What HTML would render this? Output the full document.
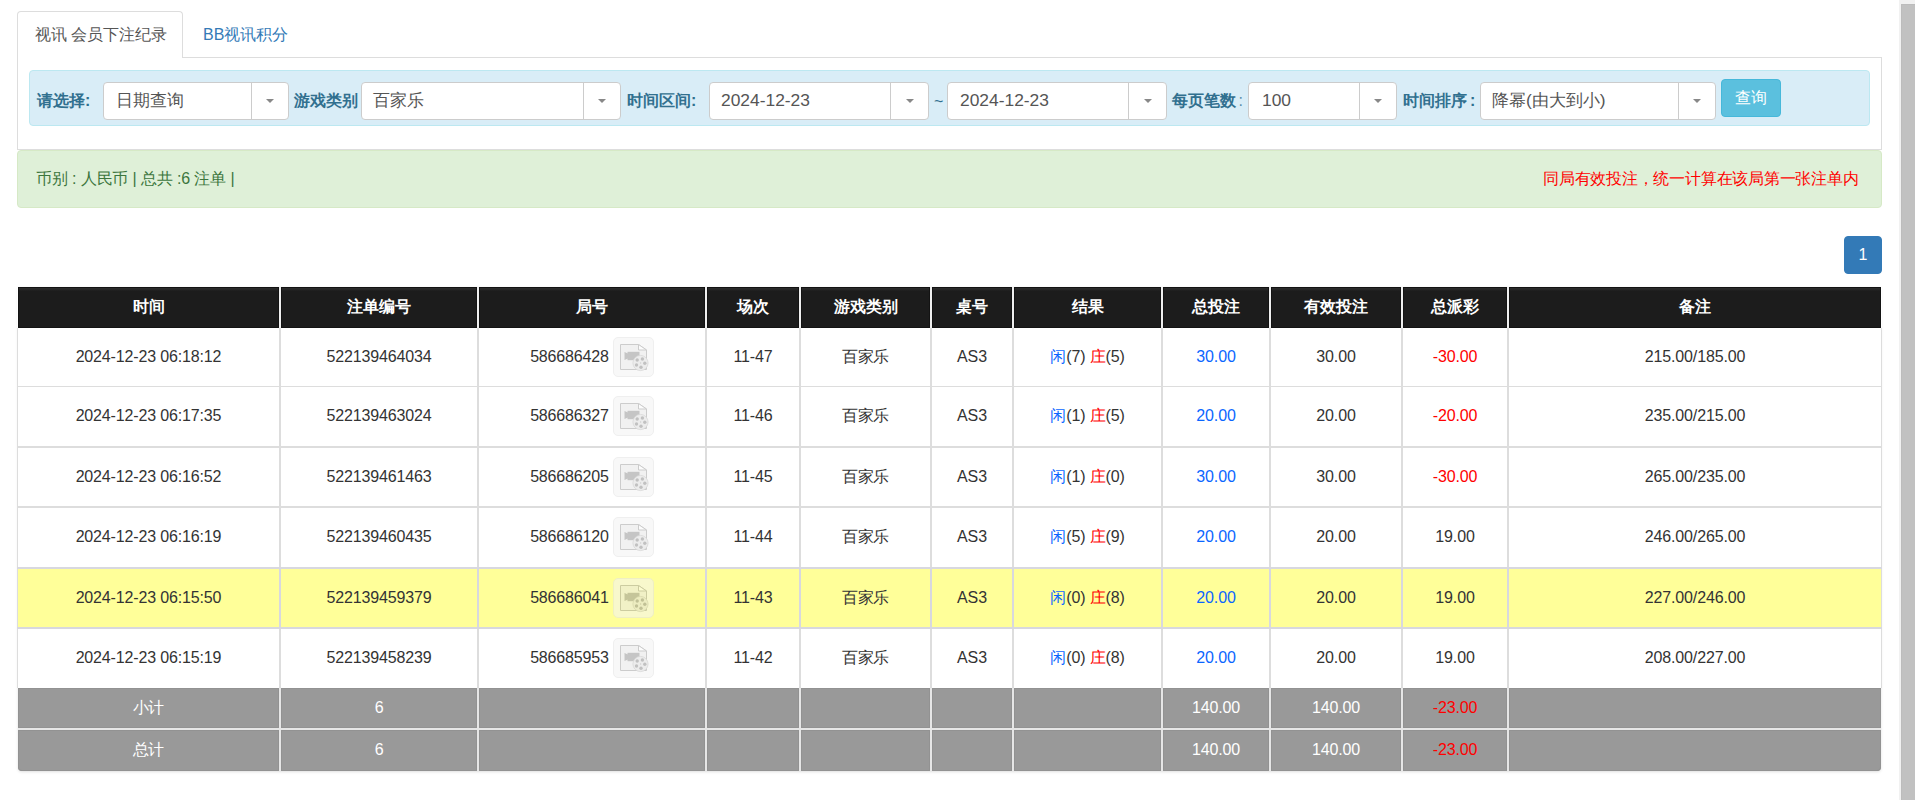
<!DOCTYPE html><html><head><meta charset="utf-8"><style>
*{box-sizing:border-box;margin:0;padding:0}
html,body{width:1915px;height:800px;overflow:hidden;background:#fff}
body{position:relative;font-family:"Liberation Sans",sans-serif;font-size:16px;color:#333}
.abs{position:absolute}
.t{position:absolute;white-space:nowrap}
.sel{position:absolute;background:#fff;border:1px solid #ccc;border-radius:4px}
.sel .dv{position:absolute;top:0;bottom:0;width:1px;background:#ccc}
.sel .txt{position:absolute;top:0;white-space:nowrap;color:#555;line-height:36px;font-size:17.4px;margin-top:-1px}
.caret{position:absolute;width:0;height:0;border-left:4px solid transparent;border-right:4px solid transparent;border-top:4px solid #888}
.lbl{position:absolute;white-space:nowrap;color:#31708f;font-weight:bold;line-height:20px}
.vl{position:absolute}
.cell{position:absolute;text-align:center;white-space:nowrap;letter-spacing:-0.15px}
.hd{letter-spacing:0}
.blue{color:#0a66ff}
.red{color:#ff0000}
</style></head><body>
<div class="abs" style="left:17px;top:11px;width:166px;height:47px;border:1px solid #ddd;border-bottom:none;border-radius:4px 4px 0 0;background:#fff;z-index:2"></div>
<div class="t" style="left:35px;top:25px;line-height:20px;color:#555;z-index:3">视讯 会员下注纪录</div>
<div class="t" style="left:203px;top:25px;line-height:20px;color:#337ab7">BB视讯积分</div>
<div class="abs" style="left:17px;top:57px;width:1865px;height:93px;border:1px solid #ddd;border-bottom:1px solid #ddd"></div>
<div class="abs" style="left:18px;top:57px;width:164px;height:1px;background:#fff;z-index:2"></div>
<div class="abs" style="left:29px;top:70px;width:1841px;height:56px;background:#d9edf7;border:1px solid #bce8f1;border-radius:4px"></div>
<div class="lbl" style="left:37px;top:91px">请选择:</div>
<div class="sel" style="left:103px;top:82px;width:186px;height:38px"><div class="txt" style="left:12px">日期查询</div><div class="dv" style="left:147px"></div><div class="caret" style="left:162px;top:16px"></div></div>
<div class="lbl" style="left:294px;top:91px">游戏类别</div>
<div class="sel" style="left:361px;top:82px;width:260px;height:38px"><div class="txt" style="left:11px">百家乐</div><div class="dv" style="left:221px"></div><div class="caret" style="left:236px;top:16px"></div></div>
<div class="lbl" style="left:627px;top:91px">时间区间:</div>
<div class="sel" style="left:709px;top:82px;width:220px;height:38px"><div class="txt" style="left:11px">2024-12-23</div><div class="dv" style="left:180px"></div><div class="caret" style="left:196px;top:16px"></div></div>
<div class="t" style="left:934px;top:92px;line-height:20px;color:#31708f">~</div>
<div class="sel" style="left:947px;top:82px;width:220px;height:38px"><div class="txt" style="left:12px">2024-12-23</div><div class="dv" style="left:180px"></div><div class="caret" style="left:196px;top:16px"></div></div>
<div class="lbl" style="left:1172px;top:91px">每页笔数 <span style="font-weight:normal;margin-left:-2px;opacity:.75">:</span></div>
<div class="sel" style="left:1248px;top:82px;width:149px;height:38px"><div class="txt" style="left:13px">100</div><div class="dv" style="left:110px"></div><div class="caret" style="left:125px;top:16px"></div></div>
<div class="lbl" style="left:1403px;top:91px">时间排序 <span style="margin-left:-1.5px">:</span></div>
<div class="sel" style="left:1480px;top:82px;width:236px;height:38px"><div class="txt" style="left:11px">降幂(由大到小)</div><div class="dv" style="left:197px"></div><div class="caret" style="left:212px;top:16px"></div></div>
<div class="abs" style="left:1721px;top:79px;width:60px;height:38px;background:#5bc0de;border:1px solid #46b8da;border-radius:4px;color:#fff;text-align:center;line-height:36px">查询</div>
<div class="abs" style="left:17px;top:150px;width:1865px;height:58px;background:#dff0d8;border:1px solid #d6e9c6;border-radius:4px"></div>
<div class="t" style="left:36px;top:169px;line-height:20px;color:#3c763d;letter-spacing:-0.13px">币别 : 人民币 | 总共 :6 注单 |</div>
<div class="t" style="left:1543px;top:169px;line-height:20px;color:#ff0000;letter-spacing:-0.22px">同局有效投注，统一计算在该局第一张注单内</div>
<div class="abs" style="left:1844px;top:236px;width:38px;height:38px;background:#337ab7;border:1px solid #337ab7;border-radius:4px;color:#fff;text-align:center;line-height:36px">1</div>
<div class="abs" style="left:18px;top:287px;width:1863px;height:484px;border-radius:0 0 4px 4px;box-shadow:0 1px 3px rgba(0,0,0,.13)"></div>
<div class="abs" style="left:17px;top:328px;width:1865px;height:360px;background:#fff"></div>
<div class="abs" style="left:17px;top:287px;width:1865px;height:41px;background:#efefef"></div>
<div class="cell hd" style="left:18px;top:287px;width:261px;height:41px;line-height:39px;color:#fff;font-weight:bold;background:linear-gradient(#2a2a2a 0,#2a2a2a 2px,#1c1c1c 4px,#1c1c1c);box-shadow:inset 0 0 0 1px #131313">时间</div>
<div class="cell hd" style="left:281px;top:287px;width:196px;height:41px;line-height:39px;color:#fff;font-weight:bold;background:linear-gradient(#2a2a2a 0,#2a2a2a 2px,#1c1c1c 4px,#1c1c1c);box-shadow:inset 0 0 0 1px #131313">注单编号</div>
<div class="cell hd" style="left:479px;top:287px;width:226px;height:41px;line-height:39px;color:#fff;font-weight:bold;background:linear-gradient(#2a2a2a 0,#2a2a2a 2px,#1c1c1c 4px,#1c1c1c);box-shadow:inset 0 0 0 1px #131313">局号</div>
<div class="cell hd" style="left:707px;top:287px;width:92px;height:41px;line-height:39px;color:#fff;font-weight:bold;background:linear-gradient(#2a2a2a 0,#2a2a2a 2px,#1c1c1c 4px,#1c1c1c);box-shadow:inset 0 0 0 1px #131313">场次</div>
<div class="cell hd" style="left:801px;top:287px;width:129px;height:41px;line-height:39px;color:#fff;font-weight:bold;background:linear-gradient(#2a2a2a 0,#2a2a2a 2px,#1c1c1c 4px,#1c1c1c);box-shadow:inset 0 0 0 1px #131313">游戏类别</div>
<div class="cell hd" style="left:932px;top:287px;width:80px;height:41px;line-height:39px;color:#fff;font-weight:bold;background:linear-gradient(#2a2a2a 0,#2a2a2a 2px,#1c1c1c 4px,#1c1c1c);box-shadow:inset 0 0 0 1px #131313">桌号</div>
<div class="cell hd" style="left:1014px;top:287px;width:147px;height:41px;line-height:39px;color:#fff;font-weight:bold;background:linear-gradient(#2a2a2a 0,#2a2a2a 2px,#1c1c1c 4px,#1c1c1c);box-shadow:inset 0 0 0 1px #131313">结果</div>
<div class="cell hd" style="left:1163px;top:287px;width:106px;height:41px;line-height:39px;color:#fff;font-weight:bold;background:linear-gradient(#2a2a2a 0,#2a2a2a 2px,#1c1c1c 4px,#1c1c1c);box-shadow:inset 0 0 0 1px #131313">总投注</div>
<div class="cell hd" style="left:1271px;top:287px;width:130px;height:41px;line-height:39px;color:#fff;font-weight:bold;background:linear-gradient(#2a2a2a 0,#2a2a2a 2px,#1c1c1c 4px,#1c1c1c);box-shadow:inset 0 0 0 1px #131313">有效投注</div>
<div class="cell hd" style="left:1403px;top:287px;width:104px;height:41px;line-height:39px;color:#fff;font-weight:bold;background:linear-gradient(#2a2a2a 0,#2a2a2a 2px,#1c1c1c 4px,#1c1c1c);box-shadow:inset 0 0 0 1px #131313">总派彩</div>
<div class="cell hd" style="left:1509px;top:287px;width:372px;height:41px;line-height:39px;color:#fff;font-weight:bold;background:linear-gradient(#2a2a2a 0,#2a2a2a 2px,#1c1c1c 4px,#1c1c1c);box-shadow:inset 0 0 0 1px #131313">备注</div>
<div class="abs" style="left:17px;top:287px;width:1px;height:41px;background:#fff"></div>
<div class="abs" style="left:1881px;top:287px;width:1px;height:41px;background:#fff"></div>
<div class="abs" style="left:18px;top:569px;width:1863px;height:58px;background:#ffff99"></div>
<div class="abs" style="left:17px;top:328px;width:1px;height:360px;background:#ddd"></div>
<div class="abs" style="left:1881px;top:328px;width:1px;height:360px;background:#ddd"></div>
<div class="abs" style="left:17px;top:386px;width:1865px;height:1px;background:#dddddd"></div>
<div class="abs" style="left:17px;top:446px;width:1865px;height:2px;background:#dddddd"></div>
<div class="abs" style="left:17px;top:506px;width:1865px;height:2px;background:#dddddd"></div>
<div class="abs" style="left:17px;top:567px;width:1865px;height:2px;background:#d8d8df"></div>
<div class="abs" style="left:17px;top:627px;width:1865px;height:2px;background:#d8d8df"></div>
<div class="abs" style="left:279px;top:328px;width:2px;height:360px;background:#dddddd"></div>
<div class="abs" style="left:279px;top:567px;width:2px;height:62px;background:#d8d8df"></div>
<div class="abs" style="left:477px;top:328px;width:2px;height:360px;background:#dddddd"></div>
<div class="abs" style="left:477px;top:567px;width:2px;height:62px;background:#d8d8df"></div>
<div class="abs" style="left:705px;top:328px;width:2px;height:360px;background:#dddddd"></div>
<div class="abs" style="left:705px;top:567px;width:2px;height:62px;background:#d8d8df"></div>
<div class="abs" style="left:799px;top:328px;width:2px;height:360px;background:#dddddd"></div>
<div class="abs" style="left:799px;top:567px;width:2px;height:62px;background:#d8d8df"></div>
<div class="abs" style="left:930px;top:328px;width:2px;height:360px;background:#dddddd"></div>
<div class="abs" style="left:930px;top:567px;width:2px;height:62px;background:#d8d8df"></div>
<div class="abs" style="left:1012px;top:328px;width:2px;height:360px;background:#dddddd"></div>
<div class="abs" style="left:1012px;top:567px;width:2px;height:62px;background:#d8d8df"></div>
<div class="abs" style="left:1161px;top:328px;width:2px;height:360px;background:#dddddd"></div>
<div class="abs" style="left:1161px;top:567px;width:2px;height:62px;background:#d8d8df"></div>
<div class="abs" style="left:1269px;top:328px;width:2px;height:360px;background:#dddddd"></div>
<div class="abs" style="left:1269px;top:567px;width:2px;height:62px;background:#d8d8df"></div>
<div class="abs" style="left:1401px;top:328px;width:2px;height:360px;background:#dddddd"></div>
<div class="abs" style="left:1401px;top:567px;width:2px;height:62px;background:#d8d8df"></div>
<div class="abs" style="left:1507px;top:328px;width:2px;height:360px;background:#dddddd"></div>
<div class="abs" style="left:1507px;top:567px;width:2px;height:62px;background:#d8d8df"></div>
<div class="cell" style="left:18px;top:328px;width:261px;height:58px;line-height:58px">2024-12-23 06:18:12</div>
<div class="cell" style="left:281px;top:328px;width:196px;height:58px;line-height:58px">522139464034</div>
<div class="cell" style="left:479px;top:328px;width:226px;height:58px;line-height:58px;display:flex;align-items:center;justify-content:center"><span style="line-height:20px">586686428</span><span style="margin-left:4px;display:block;width:41px;height:40px;line-height:0"><svg width="41" height="40" viewBox="0 0 41 40" style="display:block;opacity:0.57">
<rect x="0.5" y="0.5" width="40" height="39" rx="4.5" fill="#f3f3f3" stroke="#e3e3e3"/>
<path d="M7.5 7.5 H25.5 L33.5 13 V32.5 H7.5 Z" fill="#e8e8e8" stroke="#a6a6a6"/>
<path d="M25.5 7.5 V13 H33.5 Z" fill="#fbfbfb" stroke="#a6a6a6" stroke-linejoin="round"/>
<path d="M11.5 15 L15 16.5 V21.5 L11.5 23 Z" fill="#9b9b9b"/>
<path d="M14.5 14.8 H26.5 V23.2 H14.5 Z" fill="#9b9b9b"/>
<circle cx="27.5" cy="26" r="7.6" fill="#dfdfdf" stroke="#bbbbbb" stroke-width="0.8"/>
<circle cx="29.4" cy="22" r="1.7" fill="#949494"/><circle cx="24.2" cy="23" r="1.7" fill="#949494"/>
<circle cx="31.8" cy="26.2" r="1.7" fill="#949494"/><circle cx="23.5" cy="28" r="1.7" fill="#949494"/>
<circle cx="28" cy="30.2" r="1.7" fill="#949494"/><circle cx="27.6" cy="26" r="0.7" fill="#adadad"/>
</svg></span></div>
<div class="cell" style="left:707px;top:328px;width:92px;height:58px;line-height:58px">11-47</div>
<div class="cell" style="left:801px;top:328px;width:129px;height:58px;line-height:58px">百家乐</div>
<div class="cell" style="left:932px;top:328px;width:80px;height:58px;line-height:58px">AS3</div>
<div class="cell" style="left:1014px;top:328px;width:147px;height:58px;line-height:58px"><span class="blue">闲</span>(7) <span class="red">庄</span>(5)</div>
<div class="cell blue" style="left:1163px;top:328px;width:106px;height:58px;line-height:58px">30.00</div>
<div class="cell" style="left:1271px;top:328px;width:130px;height:58px;line-height:58px">30.00</div>
<div class="cell red" style="left:1403px;top:328px;width:104px;height:58px;line-height:58px">-30.00</div>
<div class="cell" style="left:1509px;top:328px;width:372px;height:58px;line-height:58px">215.00/185.00</div>
<div class="cell" style="left:18px;top:386px;width:261px;height:59px;line-height:59px">2024-12-23 06:17:35</div>
<div class="cell" style="left:281px;top:386px;width:196px;height:59px;line-height:59px">522139463024</div>
<div class="cell" style="left:479px;top:386px;width:226px;height:59px;line-height:59px;display:flex;align-items:center;justify-content:center"><span style="line-height:20px">586686327</span><span style="margin-left:4px;display:block;width:41px;height:40px;line-height:0"><svg width="41" height="40" viewBox="0 0 41 40" style="display:block;opacity:0.57">
<rect x="0.5" y="0.5" width="40" height="39" rx="4.5" fill="#f3f3f3" stroke="#e3e3e3"/>
<path d="M7.5 7.5 H25.5 L33.5 13 V32.5 H7.5 Z" fill="#e8e8e8" stroke="#a6a6a6"/>
<path d="M25.5 7.5 V13 H33.5 Z" fill="#fbfbfb" stroke="#a6a6a6" stroke-linejoin="round"/>
<path d="M11.5 15 L15 16.5 V21.5 L11.5 23 Z" fill="#9b9b9b"/>
<path d="M14.5 14.8 H26.5 V23.2 H14.5 Z" fill="#9b9b9b"/>
<circle cx="27.5" cy="26" r="7.6" fill="#dfdfdf" stroke="#bbbbbb" stroke-width="0.8"/>
<circle cx="29.4" cy="22" r="1.7" fill="#949494"/><circle cx="24.2" cy="23" r="1.7" fill="#949494"/>
<circle cx="31.8" cy="26.2" r="1.7" fill="#949494"/><circle cx="23.5" cy="28" r="1.7" fill="#949494"/>
<circle cx="28" cy="30.2" r="1.7" fill="#949494"/><circle cx="27.6" cy="26" r="0.7" fill="#adadad"/>
</svg></span></div>
<div class="cell" style="left:707px;top:386px;width:92px;height:59px;line-height:59px">11-46</div>
<div class="cell" style="left:801px;top:386px;width:129px;height:59px;line-height:59px">百家乐</div>
<div class="cell" style="left:932px;top:386px;width:80px;height:59px;line-height:59px">AS3</div>
<div class="cell" style="left:1014px;top:386px;width:147px;height:59px;line-height:59px"><span class="blue">闲</span>(1) <span class="red">庄</span>(5)</div>
<div class="cell blue" style="left:1163px;top:386px;width:106px;height:59px;line-height:59px">20.00</div>
<div class="cell" style="left:1271px;top:386px;width:130px;height:59px;line-height:59px">20.00</div>
<div class="cell red" style="left:1403px;top:386px;width:104px;height:59px;line-height:59px">-20.00</div>
<div class="cell" style="left:1509px;top:386px;width:372px;height:59px;line-height:59px">235.00/215.00</div>
<div class="cell" style="left:18px;top:448px;width:261px;height:58px;line-height:58px">2024-12-23 06:16:52</div>
<div class="cell" style="left:281px;top:448px;width:196px;height:58px;line-height:58px">522139461463</div>
<div class="cell" style="left:479px;top:448px;width:226px;height:58px;line-height:58px;display:flex;align-items:center;justify-content:center"><span style="line-height:20px">586686205</span><span style="margin-left:4px;display:block;width:41px;height:40px;line-height:0"><svg width="41" height="40" viewBox="0 0 41 40" style="display:block;opacity:0.57">
<rect x="0.5" y="0.5" width="40" height="39" rx="4.5" fill="#f3f3f3" stroke="#e3e3e3"/>
<path d="M7.5 7.5 H25.5 L33.5 13 V32.5 H7.5 Z" fill="#e8e8e8" stroke="#a6a6a6"/>
<path d="M25.5 7.5 V13 H33.5 Z" fill="#fbfbfb" stroke="#a6a6a6" stroke-linejoin="round"/>
<path d="M11.5 15 L15 16.5 V21.5 L11.5 23 Z" fill="#9b9b9b"/>
<path d="M14.5 14.8 H26.5 V23.2 H14.5 Z" fill="#9b9b9b"/>
<circle cx="27.5" cy="26" r="7.6" fill="#dfdfdf" stroke="#bbbbbb" stroke-width="0.8"/>
<circle cx="29.4" cy="22" r="1.7" fill="#949494"/><circle cx="24.2" cy="23" r="1.7" fill="#949494"/>
<circle cx="31.8" cy="26.2" r="1.7" fill="#949494"/><circle cx="23.5" cy="28" r="1.7" fill="#949494"/>
<circle cx="28" cy="30.2" r="1.7" fill="#949494"/><circle cx="27.6" cy="26" r="0.7" fill="#adadad"/>
</svg></span></div>
<div class="cell" style="left:707px;top:448px;width:92px;height:58px;line-height:58px">11-45</div>
<div class="cell" style="left:801px;top:448px;width:129px;height:58px;line-height:58px">百家乐</div>
<div class="cell" style="left:932px;top:448px;width:80px;height:58px;line-height:58px">AS3</div>
<div class="cell" style="left:1014px;top:448px;width:147px;height:58px;line-height:58px"><span class="blue">闲</span>(1) <span class="red">庄</span>(0)</div>
<div class="cell blue" style="left:1163px;top:448px;width:106px;height:58px;line-height:58px">30.00</div>
<div class="cell" style="left:1271px;top:448px;width:130px;height:58px;line-height:58px">30.00</div>
<div class="cell red" style="left:1403px;top:448px;width:104px;height:58px;line-height:58px">-30.00</div>
<div class="cell" style="left:1509px;top:448px;width:372px;height:58px;line-height:58px">265.00/235.00</div>
<div class="cell" style="left:18px;top:507px;width:261px;height:59px;line-height:59px">2024-12-23 06:16:19</div>
<div class="cell" style="left:281px;top:507px;width:196px;height:59px;line-height:59px">522139460435</div>
<div class="cell" style="left:479px;top:507px;width:226px;height:59px;line-height:59px;display:flex;align-items:center;justify-content:center"><span style="line-height:20px">586686120</span><span style="margin-left:4px;display:block;width:41px;height:40px;line-height:0"><svg width="41" height="40" viewBox="0 0 41 40" style="display:block;opacity:0.57">
<rect x="0.5" y="0.5" width="40" height="39" rx="4.5" fill="#f3f3f3" stroke="#e3e3e3"/>
<path d="M7.5 7.5 H25.5 L33.5 13 V32.5 H7.5 Z" fill="#e8e8e8" stroke="#a6a6a6"/>
<path d="M25.5 7.5 V13 H33.5 Z" fill="#fbfbfb" stroke="#a6a6a6" stroke-linejoin="round"/>
<path d="M11.5 15 L15 16.5 V21.5 L11.5 23 Z" fill="#9b9b9b"/>
<path d="M14.5 14.8 H26.5 V23.2 H14.5 Z" fill="#9b9b9b"/>
<circle cx="27.5" cy="26" r="7.6" fill="#dfdfdf" stroke="#bbbbbb" stroke-width="0.8"/>
<circle cx="29.4" cy="22" r="1.7" fill="#949494"/><circle cx="24.2" cy="23" r="1.7" fill="#949494"/>
<circle cx="31.8" cy="26.2" r="1.7" fill="#949494"/><circle cx="23.5" cy="28" r="1.7" fill="#949494"/>
<circle cx="28" cy="30.2" r="1.7" fill="#949494"/><circle cx="27.6" cy="26" r="0.7" fill="#adadad"/>
</svg></span></div>
<div class="cell" style="left:707px;top:507px;width:92px;height:59px;line-height:59px">11-44</div>
<div class="cell" style="left:801px;top:507px;width:129px;height:59px;line-height:59px">百家乐</div>
<div class="cell" style="left:932px;top:507px;width:80px;height:59px;line-height:59px">AS3</div>
<div class="cell" style="left:1014px;top:507px;width:147px;height:59px;line-height:59px"><span class="blue">闲</span>(5) <span class="red">庄</span>(9)</div>
<div class="cell blue" style="left:1163px;top:507px;width:106px;height:59px;line-height:59px">20.00</div>
<div class="cell" style="left:1271px;top:507px;width:130px;height:59px;line-height:59px">20.00</div>
<div class="cell" style="left:1403px;top:507px;width:104px;height:59px;line-height:59px">19.00</div>
<div class="cell" style="left:1509px;top:507px;width:372px;height:59px;line-height:59px">246.00/265.00</div>
<div class="cell" style="left:18px;top:569px;width:261px;height:58px;line-height:58px">2024-12-23 06:15:50</div>
<div class="cell" style="left:281px;top:569px;width:196px;height:58px;line-height:58px">522139459379</div>
<div class="cell" style="left:479px;top:569px;width:226px;height:58px;line-height:58px;display:flex;align-items:center;justify-content:center"><span style="line-height:20px">586686041</span><span style="margin-left:4px;display:block;width:41px;height:40px;line-height:0"><svg width="41" height="40" viewBox="0 0 41 40" style="display:block;opacity:0.57">
<rect x="0.5" y="0.5" width="40" height="39" rx="4.5" fill="#f3f3f3" stroke="#e3e3e3"/>
<path d="M7.5 7.5 H25.5 L33.5 13 V32.5 H7.5 Z" fill="#e8e8e8" stroke="#a6a6a6"/>
<path d="M25.5 7.5 V13 H33.5 Z" fill="#fbfbfb" stroke="#a6a6a6" stroke-linejoin="round"/>
<path d="M11.5 15 L15 16.5 V21.5 L11.5 23 Z" fill="#9b9b9b"/>
<path d="M14.5 14.8 H26.5 V23.2 H14.5 Z" fill="#9b9b9b"/>
<circle cx="27.5" cy="26" r="7.6" fill="#dfdfdf" stroke="#bbbbbb" stroke-width="0.8"/>
<circle cx="29.4" cy="22" r="1.7" fill="#949494"/><circle cx="24.2" cy="23" r="1.7" fill="#949494"/>
<circle cx="31.8" cy="26.2" r="1.7" fill="#949494"/><circle cx="23.5" cy="28" r="1.7" fill="#949494"/>
<circle cx="28" cy="30.2" r="1.7" fill="#949494"/><circle cx="27.6" cy="26" r="0.7" fill="#adadad"/>
</svg></span></div>
<div class="cell" style="left:707px;top:569px;width:92px;height:58px;line-height:58px">11-43</div>
<div class="cell" style="left:801px;top:569px;width:129px;height:58px;line-height:58px">百家乐</div>
<div class="cell" style="left:932px;top:569px;width:80px;height:58px;line-height:58px">AS3</div>
<div class="cell" style="left:1014px;top:569px;width:147px;height:58px;line-height:58px"><span class="blue">闲</span>(0) <span class="red">庄</span>(8)</div>
<div class="cell blue" style="left:1163px;top:569px;width:106px;height:58px;line-height:58px">20.00</div>
<div class="cell" style="left:1271px;top:569px;width:130px;height:58px;line-height:58px">20.00</div>
<div class="cell" style="left:1403px;top:569px;width:104px;height:58px;line-height:58px">19.00</div>
<div class="cell" style="left:1509px;top:569px;width:372px;height:58px;line-height:58px">227.00/246.00</div>
<div class="cell" style="left:18px;top:628px;width:261px;height:59px;line-height:59px">2024-12-23 06:15:19</div>
<div class="cell" style="left:281px;top:628px;width:196px;height:59px;line-height:59px">522139458239</div>
<div class="cell" style="left:479px;top:628px;width:226px;height:59px;line-height:59px;display:flex;align-items:center;justify-content:center"><span style="line-height:20px">586685953</span><span style="margin-left:4px;display:block;width:41px;height:40px;line-height:0"><svg width="41" height="40" viewBox="0 0 41 40" style="display:block;opacity:0.57">
<rect x="0.5" y="0.5" width="40" height="39" rx="4.5" fill="#f3f3f3" stroke="#e3e3e3"/>
<path d="M7.5 7.5 H25.5 L33.5 13 V32.5 H7.5 Z" fill="#e8e8e8" stroke="#a6a6a6"/>
<path d="M25.5 7.5 V13 H33.5 Z" fill="#fbfbfb" stroke="#a6a6a6" stroke-linejoin="round"/>
<path d="M11.5 15 L15 16.5 V21.5 L11.5 23 Z" fill="#9b9b9b"/>
<path d="M14.5 14.8 H26.5 V23.2 H14.5 Z" fill="#9b9b9b"/>
<circle cx="27.5" cy="26" r="7.6" fill="#dfdfdf" stroke="#bbbbbb" stroke-width="0.8"/>
<circle cx="29.4" cy="22" r="1.7" fill="#949494"/><circle cx="24.2" cy="23" r="1.7" fill="#949494"/>
<circle cx="31.8" cy="26.2" r="1.7" fill="#949494"/><circle cx="23.5" cy="28" r="1.7" fill="#949494"/>
<circle cx="28" cy="30.2" r="1.7" fill="#949494"/><circle cx="27.6" cy="26" r="0.7" fill="#adadad"/>
</svg></span></div>
<div class="cell" style="left:707px;top:628px;width:92px;height:59px;line-height:59px">11-42</div>
<div class="cell" style="left:801px;top:628px;width:129px;height:59px;line-height:59px">百家乐</div>
<div class="cell" style="left:932px;top:628px;width:80px;height:59px;line-height:59px">AS3</div>
<div class="cell" style="left:1014px;top:628px;width:147px;height:59px;line-height:59px"><span class="blue">闲</span>(0) <span class="red">庄</span>(8)</div>
<div class="cell blue" style="left:1163px;top:628px;width:106px;height:59px;line-height:59px">20.00</div>
<div class="cell" style="left:1271px;top:628px;width:130px;height:59px;line-height:59px">20.00</div>
<div class="cell" style="left:1403px;top:628px;width:104px;height:59px;line-height:59px">19.00</div>
<div class="cell" style="left:1509px;top:628px;width:372px;height:59px;line-height:59px">208.00/227.00</div>
<div class="abs" style="left:18px;top:688px;width:1863px;height:83px;background:#e6e6e6;border-radius:0 0 4px 4px"></div>
<div class="cell" style="left:18px;top:688px;width:261px;height:40px;line-height:40px;background:#999;box-shadow:inset 0 0 0 1px #929292;color:#fff;">小计</div>
<div class="cell" style="left:281px;top:688px;width:196px;height:40px;line-height:40px;background:#999;box-shadow:inset 0 0 0 1px #929292;color:#fff;">6</div>
<div class="cell" style="left:479px;top:688px;width:226px;height:40px;line-height:40px;background:#999;box-shadow:inset 0 0 0 1px #929292;color:#fff;"></div>
<div class="cell" style="left:707px;top:688px;width:92px;height:40px;line-height:40px;background:#999;box-shadow:inset 0 0 0 1px #929292;color:#fff;"></div>
<div class="cell" style="left:801px;top:688px;width:129px;height:40px;line-height:40px;background:#999;box-shadow:inset 0 0 0 1px #929292;color:#fff;"></div>
<div class="cell" style="left:932px;top:688px;width:80px;height:40px;line-height:40px;background:#999;box-shadow:inset 0 0 0 1px #929292;color:#fff;"></div>
<div class="cell" style="left:1014px;top:688px;width:147px;height:40px;line-height:40px;background:#999;box-shadow:inset 0 0 0 1px #929292;color:#fff;"></div>
<div class="cell" style="left:1163px;top:688px;width:106px;height:40px;line-height:40px;background:#999;box-shadow:inset 0 0 0 1px #929292;color:#fff;">140.00</div>
<div class="cell" style="left:1271px;top:688px;width:130px;height:40px;line-height:40px;background:#999;box-shadow:inset 0 0 0 1px #929292;color:#fff;">140.00</div>
<div class="cell" style="left:1403px;top:688px;width:104px;height:40px;line-height:40px;background:#999;box-shadow:inset 0 0 0 1px #929292;color:#ff0000;">-23.00</div>
<div class="cell" style="left:1509px;top:688px;width:372px;height:40px;line-height:40px;background:#999;box-shadow:inset 0 0 0 1px #929292;color:#fff;"></div>
<div class="cell" style="left:18px;top:730px;width:261px;height:41px;line-height:39px;background:#999;box-shadow:inset 0 0 0 1px #929292;color:#fff;border-bottom-left-radius:4px;">总计</div>
<div class="cell" style="left:281px;top:730px;width:196px;height:41px;line-height:39px;background:#999;box-shadow:inset 0 0 0 1px #929292;color:#fff;">6</div>
<div class="cell" style="left:479px;top:730px;width:226px;height:41px;line-height:39px;background:#999;box-shadow:inset 0 0 0 1px #929292;color:#fff;"></div>
<div class="cell" style="left:707px;top:730px;width:92px;height:41px;line-height:39px;background:#999;box-shadow:inset 0 0 0 1px #929292;color:#fff;"></div>
<div class="cell" style="left:801px;top:730px;width:129px;height:41px;line-height:39px;background:#999;box-shadow:inset 0 0 0 1px #929292;color:#fff;"></div>
<div class="cell" style="left:932px;top:730px;width:80px;height:41px;line-height:39px;background:#999;box-shadow:inset 0 0 0 1px #929292;color:#fff;"></div>
<div class="cell" style="left:1014px;top:730px;width:147px;height:41px;line-height:39px;background:#999;box-shadow:inset 0 0 0 1px #929292;color:#fff;"></div>
<div class="cell" style="left:1163px;top:730px;width:106px;height:41px;line-height:39px;background:#999;box-shadow:inset 0 0 0 1px #929292;color:#fff;">140.00</div>
<div class="cell" style="left:1271px;top:730px;width:130px;height:41px;line-height:39px;background:#999;box-shadow:inset 0 0 0 1px #929292;color:#fff;">140.00</div>
<div class="cell" style="left:1403px;top:730px;width:104px;height:41px;line-height:39px;background:#999;box-shadow:inset 0 0 0 1px #929292;color:#ff0000;">-23.00</div>
<div class="cell" style="left:1509px;top:730px;width:372px;height:41px;line-height:39px;background:#999;box-shadow:inset 0 0 0 1px #929292;color:#fff;border-bottom-right-radius:4px;"></div>
<div class="abs" style="left:1899px;top:0;width:16px;height:800px;background:#f1f1f1"></div>
<div class="abs" style="left:1901px;top:4px;width:14px;height:796px;background:#c1c1c1;box-shadow:inset 1px 1px 0 #bcbcbc"></div>
</body></html>
